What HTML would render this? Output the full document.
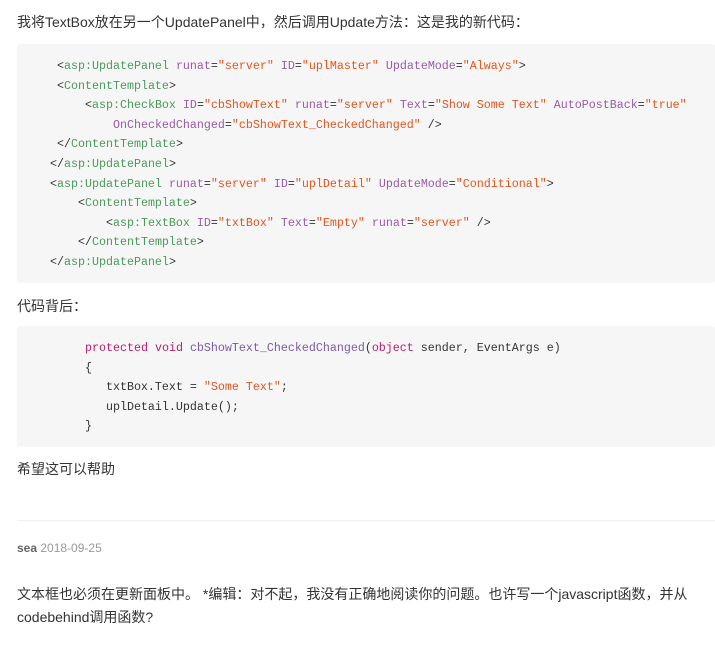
<!DOCTYPE html>
<html><head><meta charset="utf-8"><style>
body{margin:0;width:715px;height:646px;background:#fff;font-family:"Liberation Sans","Noto Sans CJK SC",sans-serif;color:#333;position:relative;overflow:hidden}
.t{position:absolute;left:17px;font-size:14px;line-height:22px;white-space:nowrap}
.code{position:absolute;left:17px;width:698px;background:#f6f6f6;border-radius:3px}
pre{margin:0;position:absolute;left:33px;font-family:"Liberation Mono","DejaVu Sans Mono",monospace;font-size:11.67px;line-height:19.6px;color:#333}
.g{color:#4b9a5a}.a{color:#9a5ba6}.s{color:#e0561f}.k{color:#b81f6e}.f{color:#7a5aa8}
</style></head><body>
<div class="t" style="top:11px">我将TextBox放在另一个UpdatePanel中，然后调用Update方法：这是我的新代码：</div>
<div class="code" style="top:44px;height:239px">
<pre style="top:13px">&nbsp;<span>&lt;</span><span class="g">asp:UpdatePanel</span> <span class="a">runat</span>=<span class="s">"server"</span> <span class="a">ID</span>=<span class="s">"uplMaster"</span> <span class="a">UpdateMode</span>=<span class="s">"Always"</span>&gt;
 &lt;<span class="g">ContentTemplate</span>&gt;
     &lt;<span class="g">asp:CheckBox</span> <span class="a">ID</span>=<span class="s">"cbShowText"</span> <span class="a">runat</span>=<span class="s">"server"</span> <span class="a">Text</span>=<span class="s">"Show Some Text"</span> <span class="a">AutoPostBack</span>=<span class="s">"true"</span>
         <span class="a">OnCheckedChanged</span>=<span class="s">"cbShowText_CheckedChanged"</span> /&gt;
 &lt;/<span class="g">ContentTemplate</span>&gt;
&lt;/<span class="g">asp:UpdatePanel</span>&gt;
&lt;<span class="g">asp:UpdatePanel</span> <span class="a">runat</span>=<span class="s">"server"</span> <span class="a">ID</span>=<span class="s">"uplDetail"</span> <span class="a">UpdateMode</span>=<span class="s">"Conditional"</span>&gt;
    &lt;<span class="g">ContentTemplate</span>&gt;
        &lt;<span class="g">asp:TextBox</span> <span class="a">ID</span>=<span class="s">"txtBox"</span> <span class="a">Text</span>=<span class="s">"Empty"</span> <span class="a">runat</span>=<span class="s">"server"</span> /&gt;
    &lt;/<span class="g">ContentTemplate</span>&gt;
&lt;/<span class="g">asp:UpdatePanel</span>&gt;</pre>
</div>
<div class="t" style="top:295px">代码背后：</div>
<div class="code" style="top:326px;height:121px">
<pre style="top:13px">     <span class="k">protected</span> <span class="k">void</span> <span class="f">cbShowText_CheckedChanged</span>(<span class="k">object</span> sender, EventArgs e)
     {
        txtBox.Text = <span class="s">"Some Text"</span>;
        uplDetail.Update();
     }</pre>
</div>
<div class="t" style="top:458px">希望这可以帮助</div>
<div style="position:absolute;left:17px;top:520px;width:698px;height:1px;background:#eee"></div>
<div class="t" style="top:537px;font-size:12px;color:#999"><b style="color:#666">sea</b> 2018-09-25</div>
<div class="t" style="top:583px;line-height:23px">文本框也必须在更新面板中。 *编辑：对不起，我没有正确地阅读你的问题。也许写一个javascript函数，并从<br>codebehind调用函数?</div>
</body></html>
